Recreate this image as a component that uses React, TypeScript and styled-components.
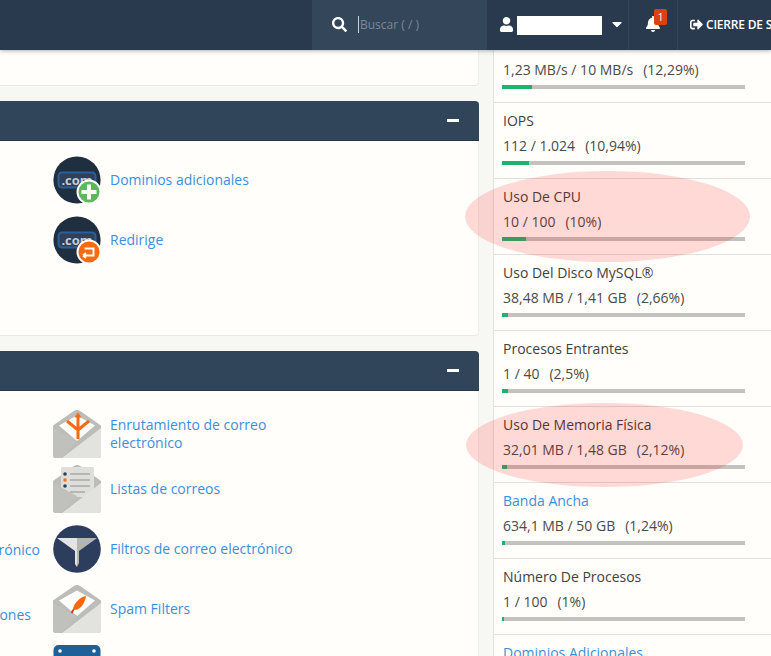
import React from 'react';
import styled, { createGlobalStyle } from 'styled-components';
import { FaBell, FaCaretDown, FaSearch, FaSignOutAlt, FaUser } from 'react-icons/fa';

const GlobalStyle = createGlobalStyle`
  html, body {
    margin: 0;
    height: 100%;
    overflow: hidden;
    background: #f7f7f4;
    font-family: "Open Sans", "Liberation Sans", sans-serif;
    font-size: 14px;
    color: #3f3f3f;
  }
`;

const Page = styled.div`
  position: relative;
  width: 771px;
  height: 656px;
  overflow: hidden;
`;

const TopBar = styled.header`
  position: relative;
  z-index: 3;
  height: 50px;
  display: flex;
  justify-content: flex-end;
  background: #293a4e;
  box-shadow: 0 1px 4px rgba(0, 0, 0, 0.3);
  color: #fff;
`;

const SearchBox = styled.div`
  width: 174px;
  padding: 0 0 2px 20px;
  box-sizing: border-box;
  display: flex;
  align-items: center;
  background: #34465a;
  font-size: 15px;
`;

const SearchInput = styled.span`
  margin-left: 11px;
  padding-left: 1px;
  border-left: 1px solid #c8d0d8;
  color: #7d8995;
  font-size: 12px;
  line-height: 17px;
`;

const BarCell = styled.div<{ $width: number; $pad: number }>`
  width: ${(p) => p.$width}px;
  padding: 0 0 2px ${(p) => p.$pad}px;
  box-sizing: border-box;
  display: flex;
  flex: none;
  align-items: center;
  border-left: 1px solid #33455a;
  white-space: nowrap;

  svg {
    flex: none;
  }
`;

const HiddenName = styled.span`
  width: 85px;
  height: 19px;
  margin: 3px 7px 0 3px;
  background: #fff;
`;

const BellWrap = styled.span`
  position: relative;
  display: flex;
  font-size: 16px;
`;

const BellBadge = styled.span`
  position: absolute;
  top: -7px;
  left: 9px;
  width: 13px;
  height: 16px;
  border-radius: 2px;
  background: #d9430f;
  font-size: 10px;
  line-height: 16px;
  text-align: center;
`;

const LogoutText = styled.span`
  margin-left: 3px;
  font-size: 12px;
  font-weight: 600;
  letter-spacing: -0.2px;
`;

const Shell = styled.div`
  display: grid;
  grid-template-columns: 479px 278px;
  column-gap: 14px;
`;

const Main = styled.main`
  min-width: 0;
`;

const Card = styled.section`
  width: calc(100% + 293px);
  margin: 0 0 15px -293px;
  background: #fffefb;
  border-bottom: 1px solid #e8e8e4;
  border-right: 1px solid #eeeeea;
  border-radius: 0 0 4px 4px;
  box-sizing: border-box;
`;

const StubCard = styled(Card)`
  height: 36px;
`;

const CardHeader = styled.div`
  height: 40px;
  display: flex;
  align-items: center;
  justify-content: flex-end;
  padding-right: 20px;
  margin-right: -1px;
  background: #30455a;
  border-bottom: 1px solid #25384a;
  border-radius: 4px 4px 0 0;
  box-sizing: border-box;
`;

const Collapse = styled.span`
  width: 12px;
  height: 3px;
  background: #fff;
`;

const CardBody = styled.div<{ $top: number }>`
  min-height: 194px;
  padding-top: ${(p) => p.$top}px;
  box-sizing: border-box;
  display: grid;
  grid-template-columns: 346px 1fr;
`;

const Column = styled.div`
  display: flex;
  flex-direction: column;
`;

const Item = styled.div<{ $bottom?: number }>`
  height: 48px;
  margin: 6px 0 ${(p) => p.$bottom ?? 6}px;
  display: flex;
  align-items: center;
  gap: 9px;
`;

const IconBox = styled.span`
  width: 48px;
  height: 48px;
  flex: none;
`;

const ItemLink = styled.a`
  width: 190px;
  color: #3d8ed9;
  line-height: 18px;
`;

const OffPageItem = styled.div<{ $right: number; $lift: number }>`
  height: 60px;
  box-sizing: border-box;
  padding: 0 ${(p) => p.$right}px ${(p) => p.$lift}px 0;
  display: flex;
  align-items: center;
  justify-content: flex-end;
  color: #3d8ed9;
  white-space: nowrap;
`;

const Sidebar = styled.aside`
  margin-top: -23px;
  background: #fffefb;
  border-left: 1px solid #e2e2de;
`;

const Stat = styled.div`
  height: 76px;
  padding: 8px 26px 0 8px;
  box-sizing: border-box;
  border-bottom: 1px solid #e0e0dc;
`;

const StatTitle = styled.div<{ $link?: boolean }>`
  height: 20px;
  padding-left: 1px;
  line-height: 20px;
  color: ${(p) => (p.$link ? '#3d8ed9' : '#3f3f3f')};
`;

const StatValue = styled.div`
  display: flex;
  gap: 10px;
  margin-top: 5px;
  padding-left: 1px;
  line-height: 20px;
  color: #4a4a4a;
`;

const Track = styled.div`
  height: 4px;
  margin-top: 5px;
  background: #c2c2be;
`;

const Fill = styled.div`
  height: 100%;
  background: #1fb26d;
`;

const Highlight = styled.div<{ $left: number; $top: number; $width: number; $height: number }>`
  position: absolute;
  z-index: 2;
  left: ${(p) => p.$left}px;
  top: ${(p) => p.$top}px;
  width: ${(p) => p.$width}px;
  height: ${(p) => p.$height}px;
  border-radius: 50%;
  background: rgba(255, 0, 0, 0.145);
`;

const ComIcon = ({ badge }: { badge: 'add' | 'redirect' }) => (
  <svg width="48" height="48" viewBox="0 0 48 48">
    <circle cx="24" cy="24" r="23.6" fill="#1f2f3f" />
    <rect x="5.5" y="16.5" width="37" height="15" rx="3.5" fill="#2f4058" stroke="#28609c" strokeWidth="2" />
    <text x="24" y="29" textAnchor="middle" fontFamily="Open Sans, sans-serif" fontWeight="700" fontSize="13" fill="#c4ccd4">.com</text>
    <circle cx="36" cy="36" r="11.5" fill={badge === 'add' ? '#5cb85c' : '#f96a0e'} stroke="#fff" strokeWidth="2" />
    {badge === 'add' ? (
      <path d="M34 28.5h4v5.500h5.500v4H38v5.500h-4V38h-5.500v-4H34z" fill="#fff" />
    ) : (
      <path d="M30 39.500h10.500v-7H31.500M30 39.500l3-2.500M30 39.500l3 2.500" fill="none" stroke="#fff" strokeWidth="2" />
    )}
  </svg>
);

const Envelope = ({ children }: { children?: React.ReactNode }) => (
  <svg width="48" height="48" viewBox="0 0 48 48">
    <path d="M0 15.500 20.500 1.200a6 6 0 0 1 7 0L48 15.500V45a3 3 0 0 1-3 3H3a3 3 0 0 1-3-3z" fill="#bcbcb9" />
    <path d="M6 15.500 24 5.500l18 10L24 31z" fill="#fff" />
    {children}
    <path d="M48 18v27a3 3 0 0 1-3 3H9z" fill="#e2e2de" />
    <path d="M0 18v27a3 3 0 0 0 3 3h6l15-17z" fill="#c0c0bd" />
  </svg>
);

const RoutingIcon = () => (
  <Envelope>
    <path d="M25 6v23M25 20l-11-9M25 20l11-9" fill="none" stroke="#f96a0e" strokeWidth="3" />
    <path d="M25 2.500l-3.500 5h7z" fill="#f96a0e" />
  </Envelope>
);

const ListIcon = () => (
  <svg width="48" height="48" viewBox="0 0 48 48">
    <path d="M0 16 20.500 1.200a6 6 0 0 1 7 0L48 16v29a3 3 0 0 1-3 3H3a3 3 0 0 1-3-3z" fill="#bcbcb9" />
    <rect x="8" y="2" width="33" height="30" rx="1.500" fill="#dededb" />
    <circle cx="12" cy="9" r="1.800" fill="#2f4058" />
    <rect x="10.500" y="13.500" width="3" height="3" fill="#f96a0e" />
    <circle cx="12" cy="21" r="1.800" fill="#2f4058" />
    <path d="M17 9h20M17 15h20M17 21h20M17 27h15" stroke="#a9a9a6" strokeWidth="1.500" />
    <path d="M48 18v27a3 3 0 0 1-3 3H9z" fill="#e2e2de" />
    <path d="M0 18v27a3 3 0 0 0 3 3h6l15-17z" fill="#c0c0bd" />
  </svg>
);

const FilterIcon = () => (
  <svg width="48" height="48" viewBox="0 0 48 48">
    <circle cx="24" cy="24" r="23.800" fill="#2c3d5e" />
    <path d="M4 13h20v29l-2-3V26z" fill="#e4e4e1" />
    <path d="M44 13H24v29l2-4V26z" fill="#b5b5b2" />
  </svg>
);

const QuillIcon = () => (
  <Envelope>
    <path d="M33 11c-6 1-12 7-13 13l-2 4 3-3c6 0 11-6 12-14z" fill="#f96a0e" />
    <path d="M20 24c-1 2-2 4-3 7l-1 2c2-1 3-3 5-8z" fill="#c62d1a" />
    <path d="M19 25l-2 4 1 1z" fill="#3f55a5" />
  </Envelope>
);

const CalendarIcon = () => (
  <svg width="48" height="48" viewBox="0 0 48 48">
    <rect x="0.500" y="0" width="47" height="48" rx="5" fill="#1f6099" />
    <circle cx="7" cy="6" r="1.800" fill="#fff" />
    <circle cx="41" cy="6" r="1.800" fill="#fff" />
  </svg>
);

const stats = [
  { title: 'Entrada Y Salida', value: '1,23 MB/s / 10 MB/s', pct: '(12,29%)', fill: 12.29 },
  { title: 'IOPS', value: '112 / 1.024', pct: '(10,94%)', fill: 10.94 },
  { title: 'Uso De CPU', value: '10 / 100', pct: '(10%)', fill: 10 },
  { title: 'Uso Del Disco MySQL®', value: '38,48 MB / 1,41 GB', pct: '(2,66%)', fill: 2.66 },
  { title: 'Procesos Entrantes', value: '1 / 40', pct: '(2,5%)', fill: 2.5 },
  { title: 'Uso De Memoria Física', value: '32,01 MB / 1,48 GB', pct: '(2,12%)', fill: 2.12 },
  { title: 'Banda Ancha', value: '634,1 MB / 50 GB', pct: '(1,24%)', fill: 1.24, link: true },
  { title: 'Número De Procesos', value: '1 / 100', pct: '(1%)', fill: 1 },
  { title: 'Dominios Adicionales', value: '1 / 10', pct: '(10%)', fill: 10, link: true },
];

const App: React.FC = () => {
  return (
    <Page>
      <GlobalStyle />
      <TopBar>
        <SearchBox>
          <FaSearch />
          <SearchInput>Buscar ( / )</SearchInput>
        </SearchBox>
        <BarCell $width={142} $pad={12}>
          <FaUser size={15} />
          <HiddenName />
          <FaCaretDown size={16} />
        </BarCell>
        <BarCell $width={49} $pad={16}>
          <BellWrap>
            <FaBell />
            <BellBadge>1</BellBadge>
          </BellWrap>
        </BarCell>
        <BarCell $width={94} $pad={12}>
          <FaSignOutAlt size={13} />
          <LogoutText>CIERRE DE SESIÓN</LogoutText>
        </BarCell>
      </TopBar>

      <Shell>
        <Main>
          <StubCard />

          <Card>
            <CardHeader>
              <Collapse />
            </CardHeader>
            <CardBody $top={9}>
              <Column />
              <Column>
                <Item>
                  <IconBox><ComIcon badge="add" /></IconBox>
                  <ItemLink>Dominios adicionales</ItemLink>
                </Item>
                <Item>
                  <IconBox><ComIcon badge="redirect" /></IconBox>
                  <ItemLink>Redirige</ItemLink>
                </Item>
              </Column>
            </CardBody>
          </Card>

          <Card>
            <CardHeader>
              <Collapse />
            </CardHeader>
            <CardBody $top={13}>
              <Column>
                <OffPageItem $right={0} $lift={0} />
                <OffPageItem $right={0} $lift={0} />
                <OffPageItem $right={13} $lift={10}>Filtros globales de correo electrónico</OffPageItem>
                <OffPageItem $right={22} $lift={0}>Configuraciones</OffPageItem>
              </Column>
              <Column>
                <Item $bottom={1}>
                  <IconBox><RoutingIcon /></IconBox>
                  <ItemLink>Enrutamiento de correo electrónico</ItemLink>
                </Item>
                <Item>
                  <IconBox><ListIcon /></IconBox>
                  <ItemLink>Listas de correos</ItemLink>
                </Item>
                <Item>
                  <IconBox><FilterIcon /></IconBox>
                  <ItemLink>Filtros de correo electrónico</ItemLink>
                </Item>
                <Item>
                  <IconBox><QuillIcon /></IconBox>
                  <ItemLink>Spam Filters</ItemLink>
                </Item>
                <Item>
                  <IconBox><CalendarIcon /></IconBox>
                </Item>
              </Column>
            </CardBody>
          </Card>
        </Main>

        <Sidebar>
          {stats.map((s) => (
            <Stat key={s.title}>
              <StatTitle $link={s.link}>{s.title}</StatTitle>
              <StatValue>
                <span>{s.value}</span>
                <span>{s.pct}</span>
              </StatValue>
              <Track>
                <Fill style={{ width: `${s.fill}%` }} />
              </Track>
            </Stat>
          ))}
        </Sidebar>
      </Shell>

      <Highlight $left={465} $top={171} $width={285} $height={91} />
      <Highlight $left={466} $top={403} $width={277} $height={84} />
    </Page>
  );
};

export default App;
